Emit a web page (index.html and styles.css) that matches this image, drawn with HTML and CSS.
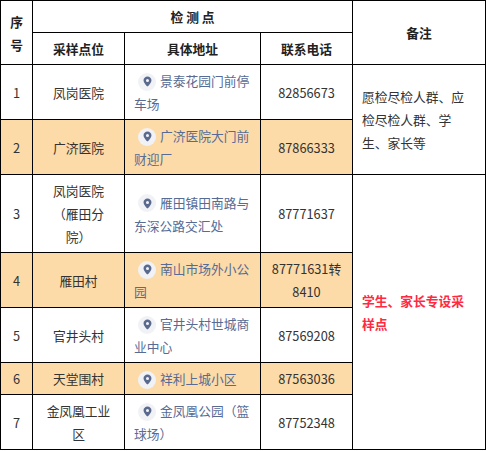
FILE: index.html
```html
<!DOCTYPE html>
<html lang="zh">
<head>
<meta charset="utf-8">
<link rel="stylesheet" href="styles.css">
</head>
<body>
<table class="sheet">
  <colgroup>
    <col class="c-no">
    <col class="c-site">
    <col class="c-addr">
    <col class="c-tel">
    <col class="c-note">
  </colgroup>
  <tbody>
    <tr class="head">
      <th rowspan="2" class="narrow">序号</th>
      <th colspan="3">检 测 点</th>
      <th rowspan="2">备注</th>
    </tr>
    <tr class="head">
      <th>采样点位</th>
      <th>具体地址</th>
      <th>联系电话</th>
    </tr>
    <tr>
      <td class="no">1</td>
      <td class="site">凤岗医院</td>
      <td class="addr"><span class="pin"><svg viewBox="0 0 10 12" width="9" height="11"><path d="M5 0.4C2.5 0.4 0.6 2.3 0.6 4.7c0 2.9 3.2 5.9 4 6.7.2.2.6.2.8 0 .8-.8 4-3.8 4-6.7C9.4 2.3 7.5.4 5 .4zm0 6.1a1.7 1.7 0 1 1 0-3.4 1.7 1.7 0 0 1 0 3.4z" fill="#5a6a8e"/></svg></span>景泰花园门前停车场</td>
      <td class="tel">82856673</td>
      <td rowspan="2" class="note">愿检尽检人群、应检尽检人群、学生、家长等</td>
    </tr>
    <tr class="hl">
      <td class="no">2</td>
      <td class="site">广济医院</td>
      <td class="addr"><span class="pin"><svg viewBox="0 0 10 12" width="9" height="11"><path d="M5 0.4C2.5 0.4 0.6 2.3 0.6 4.7c0 2.9 3.2 5.9 4 6.7.2.2.6.2.8 0 .8-.8 4-3.8 4-6.7C9.4 2.3 7.5.4 5 .4zm0 6.1a1.7 1.7 0 1 1 0-3.4 1.7 1.7 0 0 1 0 3.4z" fill="#5a6a8e"/></svg></span>广济医院大门前财迎厂</td>
      <td class="tel">87866333</td>
    </tr>
    <tr>
      <td class="no">3</td>
      <td class="site">凤岗医院（雁田分院）</td>
      <td class="addr"><span class="pin"><svg viewBox="0 0 10 12" width="9" height="11"><path d="M5 0.4C2.5 0.4 0.6 2.3 0.6 4.7c0 2.9 3.2 5.9 4 6.7.2.2.6.2.8 0 .8-.8 4-3.8 4-6.7C9.4 2.3 7.5.4 5 .4zm0 6.1a1.7 1.7 0 1 1 0-3.4 1.7 1.7 0 0 1 0 3.4z" fill="#5a6a8e"/></svg></span>雁田镇田南路与东深公路交汇处</td>
      <td class="tel">87771637</td>
      <td rowspan="5" class="note red">学生、家长专设采样点</td>
    </tr>
    <tr class="hl">
      <td class="no">4</td>
      <td class="site">雁田村</td>
      <td class="addr"><span class="pin"><svg viewBox="0 0 10 12" width="9" height="11"><path d="M5 0.4C2.5 0.4 0.6 2.3 0.6 4.7c0 2.9 3.2 5.9 4 6.7.2.2.6.2.8 0 .8-.8 4-3.8 4-6.7C9.4 2.3 7.5.4 5 .4zm0 6.1a1.7 1.7 0 1 1 0-3.4 1.7 1.7 0 0 1 0 3.4z" fill="#5a6a8e"/></svg></span>南山市场外小公园</td>
      <td class="tel">87771631转8410</td>
    </tr>
    <tr>
      <td class="no">5</td>
      <td class="site">官井头村</td>
      <td class="addr"><span class="pin"><svg viewBox="0 0 10 12" width="9" height="11"><path d="M5 0.4C2.5 0.4 0.6 2.3 0.6 4.7c0 2.9 3.2 5.9 4 6.7.2.2.6.2.8 0 .8-.8 4-3.8 4-6.7C9.4 2.3 7.5.4 5 .4zm0 6.1a1.7 1.7 0 1 1 0-3.4 1.7 1.7 0 0 1 0 3.4z" fill="#5a6a8e"/></svg></span>官井头村世城商业中心</td>
      <td class="tel">87569208</td>
    </tr>
    <tr class="hl">
      <td class="no">6</td>
      <td class="site">天堂围村</td>
      <td class="addr"><span class="pin"><svg viewBox="0 0 10 12" width="9" height="11"><path d="M5 0.4C2.5 0.4 0.6 2.3 0.6 4.7c0 2.9 3.2 5.9 4 6.7.2.2.6.2.8 0 .8-.8 4-3.8 4-6.7C9.4 2.3 7.5.4 5 .4zm0 6.1a1.7 1.7 0 1 1 0-3.4 1.7 1.7 0 0 1 0 3.4z" fill="#5a6a8e"/></svg></span>祥利上城小区</td>
      <td class="tel">87563036</td>
    </tr>
    <tr>
      <td class="no">7</td>
      <td class="site">金凤凰工业区</td>
      <td class="addr"><span class="pin"><svg viewBox="0 0 10 12" width="9" height="11"><path d="M5 0.4C2.5 0.4 0.6 2.3 0.6 4.7c0 2.9 3.2 5.9 4 6.7.2.2.6.2.8 0 .8-.8 4-3.8 4-6.7C9.4 2.3 7.5.4 5 .4zm0 6.1a1.7 1.7 0 1 1 0-3.4 1.7 1.7 0 0 1 0 3.4z" fill="#5a6a8e"/></svg></span>金凤凰公园（篮球场）</td>
      <td class="tel">87752348</td>
    </tr>
  </tbody>
</table>
</body>
</html>
```
FILE: styles.css
```css
html, body {
  margin: 0;
  padding: 0;
  background: #ffffff;
}

.sheet {
  border-collapse: collapse;
  table-layout: fixed;
  width: 485px;
  font-family: "Noto Sans CJK SC", "Noto Sans", sans-serif;
  font-size: 12.75px;
  line-height: 23px;
  color: #333333;
  text-spacing-trim: space-all;
}

.c-no { width: 32px; }
.c-site { width: 92px; }
.c-addr { width: 136px; }
.c-tel { width: 92px; }
.c-note { width: 133px; }

.sheet tr {
  height: 32px;
}

.sheet th,
.sheet td {
  border: 1px solid #000000;
  padding: 4px 10px;
  text-align: center;
  vertical-align: middle;
  word-break: normal;
}

.sheet th {
  font-weight: bold;
  color: #222222;
}

.sheet th.narrow,
.sheet td.no {
  padding-left: 6px;
  padding-right: 6px;
}

.sheet .hl td {
  background: #fddba8;
}

.sheet td.addr {
  text-align: left;
  padding-left: 9px;
  padding-right: 9px;
  color: #576b95;
}

.pin {
  display: inline-flex;
  align-items: center;
  justify-content: center;
  width: 18px;
  height: 18px;
  border-radius: 50%;
  background: #f1f2f5;
  margin: 0 4px 0 4px;
  vertical-align: middle;
  position: relative;
  top: -1px;
}

.pin svg {
  display: block;
}

.sheet td.note {
  text-align: left;
  padding-left: 9px;
  padding-right: 10px;
  background: #ffffff;
}

.sheet td.red {
  color: #ff2941;
  font-weight: bold;
}
```
